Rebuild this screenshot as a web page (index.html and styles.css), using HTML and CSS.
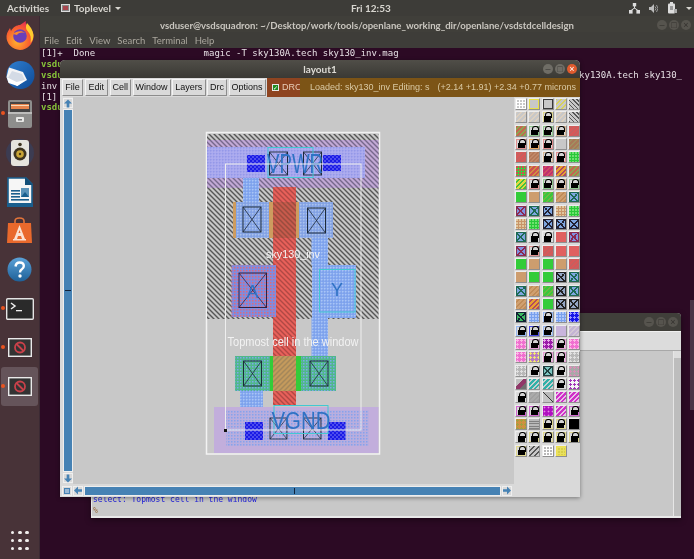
FILE: index.html
```html
<!DOCTYPE html>
<html lang="en">
<head>
<meta charset="utf-8">
<title>layout1</title>
<link rel="stylesheet" href="styles.css">
</head>
<body>
<div class="desktop">

  <header class="topbar">
    <span class="tb-activities">Activities</span>
    <span class="tb-app">
      <svg class="tb-appicon" width="9" height="8" viewBox="0 0 9 8"><rect x=".5" y=".5" width="8" height="7" fill="#888" stroke="#ddd"/><rect x="2" y="2" width="5" height="4" fill="#a8464e"/></svg>
      <span>Toplevel</span><i class="caret"></i>
    </span>
    <span class="tb-clock">Fri 12:53</span>
    <span class="tb-tray">
      <svg width="11" height="11" viewBox="0 0 11 11" fill="#ddd"><rect x="3.8" y="0" width="3.4" height="3.4"/><rect x="0" y="7" width="3.6" height="3.6"/><rect x="7.4" y="7" width="3.6" height="3.6"/><path d="M5.5 3v2.5M2 7.5 5.5 5 9 7.5" stroke="#ddd" fill="none"/></svg>
      <svg width="9" height="9" viewBox="0 0 9 9" fill="#bbb"><path d="M0 3h2l3-3v9L2 6H0z"/><path d="M6 2.500q2 2 0 4M7.500 1q3 3.500 0 7" stroke="#999" fill="none"/></svg>
      <svg width="10" height="12" viewBox="0 0 10 12" fill="#ddd"><rect x="1" y="1.500" width="7" height="10" rx="1"/><rect x="3" y="0" width="3" height="2"/><path d="M3 5h3M3 7h3" stroke="#555"/><path d="M7 7h3v4H7z" fill="#aaa"/></svg>
      <i class="caret"></i>
    </span>
  </header>

  <nav class="dock">
    <div class="dock-item">
      <svg width="30" height="30" viewBox="0 0 30 30"><defs><radialGradient id="ffx" cx=".4" cy=".7" r=".8"><stop offset="0" stop-color="#ffb52e"/><stop offset=".55" stop-color="#f9602f"/><stop offset="1" stop-color="#e0225c"/></radialGradient></defs><path d="M15 29A13.500 13.500 0 0 1 1.500 15C2 11 4 9 5 7l1 3c2-4 6-6 9-6 3-2 4-3 6-4-1 3 1 4 3 6 3 3 4.500 6 4.500 9A14 14 0 0 1 15 29z" fill="url(#ffx)"/><path d="M22 2c3 3 6 7 6.500 12 0 3-1 6-3 8 1-5 0-9-3-12-2-2-2-5-.5-8z" fill="#ffcb2e"/><circle cx="15" cy="15" r="6.800" fill="#6b3fb8"/><path d="M8 13c3-3 9-4 12-1-4-1-7 0-8 2z" fill="#ff8a2a"/></svg>
    </div>
    <div class="dock-item">
      <svg width="30" height="30" viewBox="0 0 30 30"><defs><linearGradient id="tb" x1="0" y1="0" x2="1" y2="1"><stop offset="0" stop-color="#2f7fd0"/><stop offset="1" stop-color="#0e4a96"/></linearGradient></defs><circle cx="15.500" cy="15" r="14" fill="url(#tb)"/><path d="M4 7.500 18 12 22 20 12 26 1.500 17z" fill="#f4f4f6"/><path d="M7 11l10 3 3 6-9 3-8-5z" fill="#d4dbe6"/><path d="M1.500 17l10 5 9-2-8 6-9-3z" fill="#fff"/></svg>
    </div>
    <div class="dock-item dock-running">
      <svg width="26" height="28" viewBox="0 0 26 28"><rect x="1" y="0" width="24" height="28" rx="2" fill="#8e8e8c"/><rect x="3" y="2" width="20" height="10" fill="#444"/><rect x="4" y="4" width="18" height="5" fill="#e4844c"/><rect x="4" y="5" width="18" height="1" fill="#f6d9b8"/><rect x="1" y="12" width="24" height="2" fill="#bdbdbb"/><rect x="9" y="17" width="8" height="5" rx="1" fill="#e8e8e6"/><rect x="11" y="19" width="4" height="1.500" fill="#777"/></svg>
    </div>
    <div class="dock-item">
      <svg width="30" height="28" viewBox="0 0 30 28"><circle cx="15" cy="14" r="14" fill="#3c3c52"/><rect x="6" y="1" width="18" height="26" rx="3" fill="#e6e4de"/><circle cx="15" cy="15" r="6.500" fill="#3d3320"/><circle cx="15" cy="15" r="3.800" fill="#c8a436"/><circle cx="15" cy="15" r="1.200" fill="#4a3a12"/><circle cx="15" cy="5.500" r="1.800" fill="#3d3320"/></svg>
    </div>
    <div class="dock-item">
      <svg width="26" height="30" viewBox="0 0 26 30"><path d="M1 1h18l6 6v22H1z" fill="#f6f6f6" stroke="#1a5f8e" stroke-width="1.600"/><path d="M18 0l8 8h-8z" fill="#134f78"/><rect x="0" y="26" width="26" height="4" fill="#1a5f8e"/><rect x="4" y="13" width="9" height="1.600" fill="#1a5f8e"/><rect x="4" y="16" width="9" height="1.600" fill="#1a5f8e"/><rect x="4" y="19" width="9" height="1.600" fill="#1a5f8e"/><rect x="4" y="22" width="18" height="1.600" fill="#1a5f8e"/><rect x="14" y="11" width="8" height="9" fill="#5b93b8"/><path d="M14 20l4-5 4 5z" fill="#1a5f8e"/></svg>
    </div>
    <div class="dock-item">
      <svg width="27" height="27" viewBox="0 0 27 27"><path d="M9 7V4q0-3 4.500-3T18 4v3" fill="none" stroke="#e2743a" stroke-width="1.600"/><path d="M2 6h23l1 20H1z" fill="#e9692c"/><path d="M13.500 8 8 22h3l1-3h3l1 3h3zM13.500 13l1 3h-2z" fill="#fbe3d4" fill-rule="evenodd"/><rect x="7" y="22" width="13" height="1.500" fill="#fbe3d4"/></svg>
    </div>
    <div class="dock-item">
      <svg width="25" height="25" viewBox="0 0 25 25"><defs><linearGradient id="hp" x1="0" y1="0" x2="0" y2="1"><stop offset="0" stop-color="#5ba2d8"/><stop offset="1" stop-color="#1e6098"/></linearGradient></defs><circle cx="12.500" cy="12.500" r="12" fill="url(#hp)"/><path d="M8.500 9.500Q9 5.500 12.700 5.500 16.800 5.500 16.800 9 16.800 11 14.800 12.300 13 13.400 13 15.500" fill="none" stroke="#fff" stroke-width="2.400"/><circle cx="13" cy="19" r="1.700" fill="#fff"/></svg>
    </div>
    <div class="dock-item dock-running">
      <svg width="28" height="22" viewBox="0 0 28 22"><rect x=".7" y=".7" width="26.600" height="20.600" rx="1" fill="#2a2a2a" stroke="#e4e4e4" stroke-width="1.400"/><path d="M5 5l4 3-4 3" fill="none" stroke="#eee" stroke-width="1.500"/><rect x="10" y="12" width="6" height="1.300" fill="#eee"/></svg>
    </div>
    <div class="dock-item dock-running">
      <svg width="24" height="19" viewBox="0 0 24 19"><rect x=".7" y=".7" width="22.600" height="17.600" fill="#333" stroke="#eaeaea" stroke-width="1.400"/><circle cx="12" cy="9.500" r="5" fill="none" stroke="#c9414a" stroke-width="1.800"/><path d="M8.500 6l7 7" stroke="#c9414a" stroke-width="1.800"/></svg>
    </div>
    <div class="dock-item dock-running dock-active">
      <svg width="24" height="19" viewBox="0 0 24 19"><rect x=".7" y=".7" width="22.600" height="17.600" fill="#333" stroke="#eaeaea" stroke-width="1.400"/><circle cx="12" cy="9.500" r="5" fill="none" stroke="#c9414a" stroke-width="1.800"/><path d="M8.500 6l7 7" stroke="#c9414a" stroke-width="1.800"/></svg>
    </div>
    <div class="dock-apps"><i></i><i></i><i></i><i></i><i></i><i></i><i></i><i></i><i></i></div>
  </nav>

  <section class="terminal">
    <div class="term-title">
      <span class="term-title-text">vsduser@vsdsquadron: ~/Desktop/work/tools/openlane_working_dir/openlane/vsdstdcelldesign</span>
      <span class="winbtns winbtns-term"><i>&#8211;</i><i>&#9633;</i><i>&#215;</i></span>
    </div>
    <div class="term-menu"><span>File</span><span>Edit</span><span>View</span><span>Search</span><span>Terminal</span><span>Help</span></div>
    <div class="term-body">
      <div class="term-line">[1]+  Done                    magic -T sky130A.tech sky130_inv.mag</div>
      <div class="term-line"><b>vsdu</b></div>
      <div class="term-line term-split"><b>vsdu</b><span>ky130A.tech sky130_</span></div>
      <div class="term-line">inv</div>
      <div class="term-line">[1]</div>
      <div class="term-line"><b>vsdu</b></div>
    </div>
    <i class="term-thumb"></i>
  </section>

  <section class="tkcon">
    <div class="tk-title"><span class="winbtns winbtns-tk"><i>&#8211;</i><i>&#9633;</i><i>&#215;</i></span></div>
    <div class="tk-menu"></div>
    <div class="tk-body">
      <div class="tk-text">
        <div class="tk-output">select: Topmost cell in the window</div>
        <div class="tk-prompt">%</div>
      </div>
      <div class="tk-scroll"><i></i></div>
    </div>
  </section>

  <section class="layout-win">
    <div class="lw-title">
      <span class="lw-name">layout1</span>
      <span class="winbtns winbtns-lw"><i>&#8211;</i><i>&#9633;</i><i class="close">&#215;</i></span>
    </div>
    <div class="lw-toolbar">
      <button class="mb mb-file">File</button>
      <button class="mb mb-edit">Edit</button>
      <button class="mb mb-cell">Cell</button>
      <button class="mb mb-window">Window</button>
      <button class="mb mb-layers">Layers</button>
      <button class="mb mb-drc">Drc</button>
      <button class="mb mb-options">Options</button>
      <span class="drc-check"><i class="tick">&#10003;</i>DRC</span>
      <span class="status"><span class="status-load">Loaded: sky130_inv Editing: s</span><span class="status-coord">(+2.14 +1.91) +2.34 +0.77 microns</span></span>
    </div>
    <div class="lw-main">
      <div class="vscroll">
        <span class="sbtn"><svg width="9" height="9" viewBox="0 0 9 9"><path d="M4.500 0 9 4.500H6V9H3V4.500H0z" fill="#4682b4"/></svg></span>
        <div class="vtrough"><i></i></div>
        <span class="sbtn"><svg width="9" height="9" viewBox="0 0 9 9"><path d="M4.500 9 9 4.500H6V0H3V4.500H0z" fill="#4682b4"/></svg></span>
      </div>
      <div class="canvas">
        <svg class="layout-svg" width="441" height="387" viewBox="73 97 441 387">
          <defs>
            <pattern id="nwell" width="5" height="5" patternUnits="userSpaceOnUse"><rect width="5" height="5" fill="#c8c8c8"/><path d="M0 0 5 5M-1 4 1 6M4-1 6 1" stroke="#565656" stroke-width="1.400"/></pattern>
            <pattern id="nwellpurple" width="5" height="5" patternUnits="userSpaceOnUse"><rect width="5" height="5" fill="#c2a9d6"/><path d="M0 0 5 5M-1 4 1 6M4-1 6 1" stroke="#76688c" stroke-width="1.400"/></pattern>
            <pattern id="metal" width="3" height="3" patternUnits="userSpaceOnUse"><rect width="3" height="3" fill="#84a8f0"/><rect x="0" y="0" width="1.500" height="1.500" fill="#a9c4f5"/><rect x="1.500" y="1.500" width="1" height="1" fill="#6b8fe0"/></pattern>
            <pattern id="metalvio" width="3" height="3" patternUnits="userSpaceOnUse"><rect width="3" height="3" fill="#a8a8ee"/><rect x="0" y="0" width="1.500" height="1.500" fill="#9498e8"/><rect x="1.500" y="1.500" width="1" height="1" fill="#bcb8f2"/></pattern>
            <pattern id="metalred" width="3" height="3" patternUnits="userSpaceOnUse"><rect width="3" height="3" fill="#7e8ce0"/><rect x="0" y="0" width="1.500" height="1.500" fill="#dc6a7c"/></pattern>
            <pattern id="metalgreen" width="3" height="3" patternUnits="userSpaceOnUse"><rect width="3" height="3" fill="#50b88a"/><rect x="0" y="0" width="1.500" height="1.500" fill="#7ca8ec"/></pattern>
            <pattern id="metallil" width="3" height="3" patternUnits="userSpaceOnUse"><rect width="3" height="3" fill="#b9aede"/><rect x="0" y="0" width="1.500" height="1.500" fill="#86a2ec"/></pattern>
            <pattern id="m2" width="4" height="4" patternUnits="userSpaceOnUse"><rect width="4" height="4" fill="#1a1ae6"/><circle cx="1" cy="1" r=".8" fill="#8c8cf8"/><circle cx="3" cy="3" r=".8" fill="#8c8cf8"/></pattern>
            <pattern id="polyhatch" width="5" height="5" patternUnits="userSpaceOnUse"><rect width="5" height="5" fill="#e8605a"/><path d="M0 0 5 5M-1 4 1 6M4-1 6 1" stroke="#b04844" stroke-width="1.400"/></pattern>
            <pattern id="polytan" width="5" height="5" patternUnits="userSpaceOnUse"><rect width="5" height="5" fill="#c85a4c"/><path d="M0 0 5 5M-1 4 1 6M4-1 6 1" stroke="#9a4c3e" stroke-width="1.500"/></pattern>
            <pattern id="polygreen" width="5" height="5" patternUnits="userSpaceOnUse"><rect width="5" height="5" fill="#c49a5c"/><path d="M0 5 5 0M-1 1 1-1M4 6 6 4" stroke="#a4875a" stroke-width="1.500"/></pattern>
            <g id="cx"><rect width="18" height="25" fill="none" stroke="#1d2a3a" stroke-width="1"/><path d="M0 0 18 25M18 0 0 25" stroke="#1d2a3a" stroke-width=".8"/></g>
          </defs>

          <rect class="l-frame" x="206.500" y="132.500" width="173" height="321.500"/>
          <rect x="207" y="134" width="171.500" height="185" fill="url(#nwell)"/>
          <rect x="207" y="140" width="171.500" height="48" fill="url(#nwellpurple)"/>
          <rect x="207" y="147" width="158" height="31" fill="url(#metalvio)"/>
          <rect x="247" y="155" width="18" height="17" fill="url(#m2)"/>
          <rect x="323" y="155" width="18" height="16" fill="url(#m2)"/>
          <use href="#cx" transform="translate(269.500 152) scale(1 .92)"/>
          <use href="#cx" transform="translate(303.500 152) scale(1 .92)"/>
          <rect x="268" y="147.500" width="45" height="30" class="l-label"/>
          <text class="t-pin" x="267" y="173" font-size="27" textLength="56" lengthAdjust="spacingAndGlyphs">VPWR</text>

          <rect x="243" y="178" width="16" height="24" fill="url(#metal)"/>
          <rect x="233" y="202" width="100" height="36" fill="#cd9c5f"/>
          <rect x="273" y="187" width="23" height="218" fill="url(#polyhatch)"/>
          <rect x="273" y="202" width="23" height="36" fill="url(#polytan)"/>
          <rect x="236" y="202" width="33" height="36" fill="url(#metal)" opacity=".94"/>
          <rect x="299" y="202" width="34" height="36" fill="url(#metal)" opacity=".94"/>
          <use href="#cx" transform="translate(243 207)"/>
          <use href="#cx" transform="translate(307.500 208)"/>
          <rect x="311.500" y="238" width="16.500" height="27" fill="url(#metal)"/>

          <rect x="231.500" y="265" width="44.500" height="52" fill="url(#metalred)"/>
          <rect x="239" y="273" width="27.500" height="34.500" fill="none" stroke="#2a2244" stroke-width="1"/>
          <path d="M239 273 266.500 307.500M266.500 273 239 307.500" stroke="#2a2244" stroke-width=".8"/>
          <text class="t-pin" x="252.500" y="298" font-size="18" text-anchor="middle">A</text>
          <rect x="312" y="265" width="44" height="53" fill="url(#metal)"/>
          <rect x="319.500" y="269.500" width="35.500" height="42.500" class="l-label"/>
          <text class="t-pin" x="337" y="296" font-size="18" text-anchor="middle">Y</text>
          <rect x="311.500" y="318" width="16.500" height="39" fill="url(#metal)"/>

          <rect x="235" y="356" width="101" height="35" fill="#33cc39"/>
          <rect x="235" y="356" width="35" height="35" fill="url(#metalgreen)"/>
          <rect x="301" y="356" width="35" height="35" fill="url(#metalgreen)"/>
          <rect x="273" y="356" width="23" height="35" fill="url(#polygreen)"/>
          <use href="#cx" transform="translate(243.500 361)"/>
          <use href="#cx" transform="translate(310 361)"/>
          <rect x="240" y="391" width="23" height="16" fill="url(#metal)"/>

          <rect x="214" y="407" width="164.500" height="46" fill="#c2aedc"/>
          <rect x="226" y="410" width="143" height="36" fill="url(#metallil)"/>
          <rect x="245" y="422" width="18" height="18" fill="url(#m2)"/>
          <rect x="328" y="422" width="17.500" height="18" fill="url(#m2)"/>
          <use href="#cx" transform="translate(270 418) scale(.94 .84)"/>
          <use href="#cx" transform="translate(303.500 418) scale(.97 .84)"/>
          <rect x="274" y="405.500" width="54" height="28" class="l-label"/>
          <text class="t-pin" x="301" y="429" font-size="23" text-anchor="middle" textLength="59" lengthAdjust="spacingAndGlyphs">VGND</text>

          <rect class="l-bbox" x="225.500" y="164" width="135.500" height="266"/>
          <rect x="224" y="429" width="3" height="3" fill="#111"/>
          <text class="t-white" x="293" y="258" text-anchor="middle" font-size="11.500" textLength="54" lengthAdjust="spacingAndGlyphs">sky130_inv</text>
          <text class="t-white" x="293" y="346" text-anchor="middle" font-size="12" textLength="131" lengthAdjust="spacingAndGlyphs">Topmost cell in the window</text>
        </svg>
      </div>
      <div class="palette">
        <i class="sw p-grid"></i><i class="sw p-yo"></i><i class="sw p-go"></i><i class="sw p-yh"></i><i class="sw p-dh"></i>
        <i class="sw p-lh"></i><i class="sw p-lh"></i><i class="sw lk lk-y"></i><i class="sw p-lh"></i><i class="sw p-dh"></i>
        <i class="sw p-olive"></i><i class="sw lk lk-g"></i><i class="sw lk lk-g"></i><i class="sw lk lk-t"></i><i class="sw p-redh"></i>
        <i class="sw lk lk-r"></i><i class="sw lk lk-o"></i><i class="sw lk lk-r"></i><i class="sw p-plain"></i><i class="sw p-brown"></i>
        <i class="sw p-redh"></i><i class="sw p-tandk"></i><i class="sw lk lk-t"></i><i class="sw lk lk-r"></i><i class="sw p-gdots"></i>
        <i class="sw p-grdots"></i><i class="sw p-orh"></i><i class="sw p-magh"></i><i class="sw p-oyh"></i><i class="sw p-olive"></i>
        <i class="sw p-ygh"></i><i class="sw lk lk-r"></i><i class="sw lk lk-g"></i><i class="sw lk lk-t"></i><i class="sw lk lk-g"></i>
        <i class="sw p-green"></i><i class="sw p-tan"></i><i class="sw p-gh"></i><i class="sw p-th"></i><i class="sw xx xx-g"></i>
        <i class="sw xx xx-r"></i><i class="sw xx xx-g"></i><i class="sw xx xx-b"></i><i class="sw p-tdots"></i><i class="sw p-gdots"></i>
        <i class="sw p-tdots"></i><i class="sw p-gdots"></i><i class="sw xx xx-b"></i><i class="sw xx xx-b"></i><i class="sw xx xx-b"></i>
        <i class="sw xx xx-g"></i><i class="sw lk"></i><i class="sw lk"></i><i class="sw p-red"></i><i class="sw xx xx-r"></i>
        <i class="sw xx xx-r"></i><i class="sw lk lk-r"></i><i class="sw p-redh"></i><i class="sw p-red"></i><i class="sw p-red"></i>
        <i class="sw p-green"></i><i class="sw p-tan"></i><i class="sw p-green"></i><i class="sw p-tan"></i><i class="sw p-redh"></i>
        <i class="sw p-tan"></i><i class="sw p-green"></i><i class="sw p-green"></i><i class="sw xx xx-t"></i><i class="sw xx xx-g"></i>
        <i class="sw xx xx-g"></i><i class="sw p-th"></i><i class="sw p-gh"></i><i class="sw xx xx-t"></i><i class="sw xx xx-g"></i>
        <i class="sw p-th"></i><i class="sw p-oyh"></i><i class="sw p-green"></i><i class="sw xx xx-t"></i><i class="sw xx xx-t"></i>
        <i class="sw xx xx-gg"></i><i class="sw p-bdots"></i><i class="sw lk lk-b"></i><i class="sw p-bdots"></i><i class="sw p-bdense"></i>
        <i class="sw lk lk-b"></i><i class="sw lk lk-db"></i><i class="sw lk lk-b"></i><i class="sw p-lil"></i><i class="sw p-lilh"></i>
        <i class="sw p-pink"></i><i class="sw lk lk-p"></i><i class="sw p-purp"></i><i class="sw lk lk-p"></i><i class="sw p-pink"></i>
        <i class="sw p-pink"></i><i class="sw p-yellow"></i><i class="sw lk lk-p"></i><i class="sw lk lk-p"></i><i class="sw p-gray"></i>
        <i class="sw p-gray"></i><i class="sw lk"></i><i class="sw xx xx-teal"></i><i class="sw lk"></i><i class="sw p-pg"></i>
        <i class="sw p-dph"></i><i class="sw p-teal"></i><i class="sw p-teal"></i><i class="sw lk"></i><i class="sw p-pw"></i>
        <i class="sw lk"></i><i class="sw p-gh2"></i><i class="sw p-dh2"></i><i class="sw p-mh"></i><i class="sw p-mh"></i>
        <i class="sw lk lk-m"></i><i class="sw lk lk-m"></i><i class="sw p-md"></i><i class="sw p-mh"></i><i class="sw lk lk-m"></i>
        <i class="sw p-odots"></i><i class="sw p-stripes"></i><i class="sw lk lk-y"></i><i class="sw lk lk-y"></i><i class="sw p-black"></i>
        <i class="sw lk"></i><i class="sw lk lk-y"></i><i class="sw lk lk-y"></i><i class="sw lk lk-y"></i><i class="sw lk lk-y"></i>
        <i class="sw lk lk-y"></i><i class="sw p-dh3"></i><i class="sw p-wgrid"></i><i class="sw p-ydots"></i>
      </div>
      <div class="hscroll">
        <span class="sbtn sbtn-corner"><i></i></span>
        <span class="sbtn"><svg width="9" height="9" viewBox="0 0 9 9"><path d="M0 4.500 4.500 0V3H9V6H4.500V9z" fill="#4682b4"/></svg></span>
        <div class="htrough"><i></i></div>
        <span class="sbtn"><svg width="9" height="9" viewBox="0 0 9 9"><path d="M9 4.500 4.500 0V3H0V6H4.500V9z" fill="#4682b4"/></svg></span>
      </div>
    </div>
  </section>

</div>
</body>
</html>
```
FILE: styles.css
```css
* { box-sizing: border-box; }
html, body { margin: 0; padding: 0; }
body { width: 694px; height: 559px; overflow: hidden; background: #2c0a24; font-family: "Liberation Sans", Arial, sans-serif; }

.desktop { position: relative; width: 694px; height: 559px; overflow: hidden; background: #2c0a24; filter: blur(.35px); }

/* top bar */
.topbar { position: absolute; left: 0; top: 0; width: 694px; height: 16px; background: #3d3c38; color: #d8d6d0; font: bold 10px/16px Lato, sans-serif; display: flex; align-items: center; padding-left: 7px; z-index: 5; }
.tb-activities { width: 54px; }
.tb-app { display: flex; align-items: center; gap: 4px; width: 290px; }
.tb-clock { width: 278px; }
.tb-tray { display: flex; align-items: center; gap: 9px; }
.caret { display: inline-block; width: 0; height: 0; border: 3px solid transparent; border-top: 3px solid #d8d6d0; border-bottom: 0; }

/* dock */
.dock { position: absolute; left: 0; top: 16px; bottom: 0; width: 40px; background: #483338; border-right: 1px solid #3b2a33; display: flex; flex-direction: column; align-items: center; z-index: 4; }
.dock-item { position: relative; width: 37px; height: 39px; flex: none; display: flex; align-items: center; justify-content: center; border-radius: 3px; }
.dock-running::before { content: ""; position: absolute; left: 0; top: 17px; width: 4px; height: 4px; border-radius: 50%; background: #e95420; }
.dock-active { background: #65545a; }
.dock-apps { margin-top: auto; margin-bottom: 9px; display: grid; grid-template-columns: repeat(3, 3px); gap: 4.300px; }
.dock-apps i { width: 3.500px; height: 3.500px; border-radius: 50%; background: #f2f0ee; }

/* terminal */
.terminal { position: absolute; left: 40px; top: 16px; width: 654px; bottom: 0; }
.term-title { height: 16px; background: #403f3a; display: flex; justify-content: center; color: #c9c6bf; font: bold 9.600px/18px Lato, sans-serif; position: relative; }
.term-title-text { padding-top: 1px; }
.term-menu { height: 16px; background: #3e3d39; display: flex; color: #aaa69d; font: 9.500px/17px Lato, sans-serif; padding-left: 4px; gap: 7px; }
.term-body { padding-left: 1px; font: 9px/10.900px "DejaVu Sans Mono", monospace; color: #e6e0e4; }
.term-line { width: fit-content; height: 10.900px; white-space: pre; }
.term-line b { color: #87c33a; font-weight: bold; }
.term-split { width: 641px; display: flex; justify-content: space-between; }
.term-thumb { position: absolute; right: 0; top: 284px; width: 4px; height: 110px; background: #4a3446; }

/* window controls */
.winbtns { position: absolute; display: flex; gap: 2px; }
.winbtns i { width: 10px; height: 10px; border-radius: 50%; background: #56544e; color: #34322e; font: normal 9px/10px "Liberation Sans", sans-serif; text-align: center; }
.winbtns-term { right: 3px; top: 4px; }
.winbtns-lw { right: 3px; top: 4px; }
.winbtns-lw i { background: #6f6d66; color: #3e3c38; }
.winbtns-lw .close { background: #e15b2e; color: #fff; }
.winbtns-tk { right: 3px; top: 4px; }

/* tkcon window */
.tkcon { position: absolute; left: 91px; top: 313px; width: 590px; height: 205px; background: #c8c8c8; display: flex; flex-direction: column; border-radius: 4px 4px 0 0; box-shadow: 0 2px 6px rgba(0,0,0,.4); z-index: 1; }
.tk-title { height: 18px; background: #403f3a; position: relative; border-radius: 4px 4px 0 0; flex: none; }
.tk-menu { height: 20px; background: #dcdcdc; border-top: 1px solid #f0f0f0; border-bottom: 1px solid #a8a8a8; flex: none; }
.tk-body { flex: 1; display: flex; border-bottom: 2px solid #e8e8e8; border-left: 1px solid #e8e8e8; }
.tk-text { flex: 1; display: flex; flex-direction: column; justify-content: flex-end; padding: 0 0 0 1px; font: 8px/10.500px "DejaVu Sans Mono", monospace; }
.tk-output { color: #2222dc; }
.tk-prompt { color: #a07c58; font-weight: bold; }
.tk-scroll { width: 8px; background: #bdbdbd; border-left: 1px solid #e6e6e6; }
.tk-scroll i { display: block; height: 7px; background: #ddd; }

/* layout window */
.layout-win { position: absolute; left: 60px; top: 60px; width: 520px; height: 437px; background: #d9d9d9; border-radius: 5px 5px 0 0; box-shadow: 0 1px 4px rgba(0,0,0,.4); display: flex; flex-direction: column; z-index: 3; }
.lw-title { height: 18px; flex: none; background: linear-gradient(#504e48, #3a3934); border-radius: 5px 5px 0 0; position: relative; text-align: center; color: #dedcd6; font: bold 10px/18px Lato, sans-serif; }
.lw-toolbar { height: 19px; flex: none; display: flex; align-items: stretch; padding: 1px 0 1px 2px; background: #d9d9d9; font: 9px/15px "Liberation Sans", sans-serif; color: #111; white-space: nowrap; }
.mb { margin: 0 1.500px 0 0; padding: 0; background: #d9d9d9; border: 1px solid; border-color: #f4f4f4 #8c8c8c #8c8c8c #f4f4f4; font: inherit; color: inherit; text-align: center; }
.mb-file { width: 21px; }
.mb-edit { width: 23.500px; }
.mb-cell { width: 21.500px; }
.mb-window { width: 38px; }
.mb-layers { width: 33.500px; }
.mb-drc { width: 20px; }
.mb-options { width: 37px; }
.drc-check { margin: -1px 0 -1px 0; width: 33px; flex: none; background: #8e4420; color: #e8cdb8; display: flex; align-items: center; padding-left: 5px; gap: 3px; }
.tick { width: 7px; height: 7px; flex: none; background: #1e8a1e; color: #fff; border: 1px solid #e8e8e8; font: bold 6px/6px "DejaVu Sans", sans-serif; text-align: center; }
.status { margin: -1px 0; flex: 1; background: #7c5416; color: #d9c9a4; display: flex; justify-content: space-between; padding: 0 4px 0 10px; align-items: center; }

.lw-main { flex: 1; display: grid; grid-template-columns: 13px 441px 66px; grid-template-rows: 387px 13px; min-height: 0; }
.vscroll { display: flex; flex-direction: column; align-items: center; padding: 1px 0 1px 2px; gap: 1px; }
.sbtn { width: 10px; height: 10px; flex: none; background: #d9d9d9; border: 1px solid #efefef; display: flex; align-items: center; justify-content: center; }
.vtrough { flex: 1; width: 10px; background: #4682b4; border: 1px solid #eeeeee; position: relative; }
.vtrough i { position: absolute; left: 1px; top: 180px; width: 6px; height: 1px; background: #10223a; }
.canvas { background: #c8c8c8; overflow: hidden; }
.layout-svg { display: block; }
.palette { grid-row: 1 / 3; grid-column: 3; display: grid; grid-template-columns: repeat(5, 13.250px); grid-auto-rows: 13.340px; padding: 1px 0 0 1px; align-content: start; background: #d9d9d9; }
.hscroll { grid-column: 1 / 3; display: flex; align-items: center; gap: 1px; padding-left: 2px; }
.sbtn-corner i { width: 6px; height: 6px; border: 1px solid #4682b4; background: #9ab8d4; }
.htrough { width: 417px; height: 10px; background: #4682b4; border: 1px solid #eee; position: relative; }
.htrough i { position: absolute; left: 209px; top: 1px; width: 1px; height: 6px; background: #10223a; }

/* SVG layers */
.l-frame { fill: none; stroke: #f2f2f2; stroke-width: 1.500; }
.l-bbox { fill: none; stroke: #eeeeee; stroke-width: 1; }
.l-label { fill: none; stroke: #42c8d2; stroke-width: 1; }
.t-pin { fill: #2f72c4; font-family: "Liberation Sans", sans-serif; }
.t-white { fill: #f2f2f2; font-family: "Liberation Sans", sans-serif; }

/* palette swatches */
.sw { display: block; width: 12px; height: 12px; background-color: #c8c8c8; border: 1px solid; border-color: #ededed #8f8f8f #8f8f8f #ededed; position: relative; }
.p-grid { background: repeating-linear-gradient(0deg, #fff 0 1px, transparent 1px 3px), repeating-linear-gradient(90deg, #fff 0 1px, transparent 1px 3px), #c8c8c8; }
.p-yo { box-shadow: inset 0 0 0 1px #e8e048; }
.p-go { box-shadow: inset 0 0 0 1px #3a3a3a; }
.p-yh { background: repeating-linear-gradient(135deg, #d8d25c 0 1px, #c8c8c8 1px 3.500px); }
.p-dh { background: repeating-linear-gradient(45deg, #555 0 1px, #c8c8c8 1px 3px); }
.p-dh2 { background: linear-gradient(45deg, #c4c4c4 46%, #333 46% 54%, #b8b8b8 54%); }
.p-dh3 { background: repeating-linear-gradient(135deg, #555 0 1px, #c8c8c8 1px 3.500px); }
.p-lh { background: repeating-linear-gradient(135deg, #ddd0c0 0 1px, #c8c8c8 1px 3.500px); }
.p-olive { background: repeating-linear-gradient(135deg, #c06a50 0 1.500px, #8aa850 1.500px 3.500px); }
.p-brown { background: repeating-linear-gradient(135deg, #a87858 0 1.500px, #a09060 1.500px 3.500px); }
.p-redh { background: repeating-linear-gradient(135deg, #d85858 0 1.500px, #c46060 1.500px 3.500px); }
.p-plain { background-color: #c8c8c8; }
.p-tandk { background: repeating-linear-gradient(135deg, #b47858 0 1.500px, #c08868 1.500px 3px); }
.p-gdots { background: radial-gradient(circle at 1px 1px, #70e070 1px, #28c838 1.200px) 0 0 / 3px 3px; }
.p-grdots { background: radial-gradient(circle at 1px 1px, #d84a50 1px, #3ccc40 1.200px) 0 0 / 3px 3px; }
.p-orh { background: repeating-linear-gradient(135deg, #cd5050 0 1.500px, #d09040 1.500px 3.500px); }
.p-magh { background: repeating-linear-gradient(135deg, #c03070 0 1.500px, #d05060 1.500px 3.500px); }
.p-oyh { background: repeating-linear-gradient(135deg, #e8a030 0 1.500px, #b04a60 1.500px 3.500px); }
.p-ygh { background: repeating-linear-gradient(135deg, #e0d840 0 1.500px, #40c040 1.500px 3.500px); }
.p-green { background-color: #33cc39; }
.p-tan { background-color: #cd9d6e; }
.p-red { background-color: #e06060; }
.p-gh { background: repeating-linear-gradient(135deg, #38c83e 0 1.500px, #70b840 1.500px 3.500px); }
.p-th { background: repeating-linear-gradient(135deg, #d0a070 0 1.500px, #c08c58 1.500px 3.500px); }
.p-tdots { background: radial-gradient(circle at 1px 1px, #e0c8a0 1px, #c89468 1.200px) 0 0 / 3px 3px; }
.p-bdots { background: radial-gradient(circle at 1px 1px, #b0c8f8 1px, #78a0ee 1.200px) 0 0 / 3px 3px; }
.p-bdense { background: radial-gradient(circle at 1.500px 1.500px, #9898ff 1px, #1616e8 1.200px) 0 0 / 4px 4px; }
.p-lil { background-color: #c8b4dc; }
.p-lilh { background: repeating-linear-gradient(135deg, #c4b4d4 0 1.500px, #d4c8d4 1.500px 3.500px); }
.p-pink { background: radial-gradient(circle at 1.500px 1.500px, #fbb8e4 1px, #f070d0 1.400px) 0 0 / 4px 4px; }
.p-purp { background: radial-gradient(circle at 1.500px 1.500px, #e8a8e8 1px, #9a1aa8 1.400px) 0 0 / 4px 4px; }
.p-yellow { background: radial-gradient(circle at 1.500px 1.500px, #f0e870 1px, #b87cc0 1.400px) 0 0 / 4px 4px; }
.p-gray { background: radial-gradient(circle at 1.500px 1.500px, #e0e0e0 1px, #b8b8b8 1.400px) 0 0 / 4px 4px; }
.p-pg { background: radial-gradient(circle at 1.500px 1.500px, #d890b8 1px, #a8a8a8 1.400px) 0 0 / 4px 4px; }
.p-dph { background: linear-gradient(135deg, #c0c0c0 35%, #903868 35% 65%, #707070 65%); }
.p-teal { background: repeating-linear-gradient(135deg, #30b0a8 0 1.500px, #c8d0d0 1.500px 3.500px); }
.p-pw { background: radial-gradient(circle at 1.500px 1.500px, #a030b8 1.200px, #f4f4f4 1.400px) 0 0 / 4px 4px; }
.p-gh2 { background: repeating-linear-gradient(135deg, #aaa 0 1.500px, #a0a0a0 1.500px 3.500px); }
.p-mh { background: repeating-linear-gradient(135deg, #d030c8 0 1.500px, #e8c0e8 1.500px 3.500px); }
.p-md { background: radial-gradient(circle at 1.500px 1.500px, #e888e8 .8px, #b010c0 1.100px) 0 0 / 4px 4px; }
.p-odots { background: radial-gradient(circle at 1.500px 1.500px, #a0a040 1px, #d09040 1.400px) 0 0 / 4px 4px; }
.p-stripes { background: repeating-linear-gradient(0deg, #808080 0 1px, #b8b8b8 1px 2.500px); }
.p-black { background-color: #000; }
.p-wgrid { background: repeating-linear-gradient(0deg, #fff 0 1px, transparent 1px 3px), repeating-linear-gradient(90deg, #fff 0 1px, transparent 1px 3px), #b8b8b8; }
.p-ydots { background: radial-gradient(circle at 1.500px 1.500px, #e8e060 1px, #d8d048 1.400px) 0 0 / 3px 3px; box-shadow: inset 0 0 0 1px #eee050; }

/* contact swatches */
.xx { --fill: #7ea6e0; --edge: #223; background:
    linear-gradient(45deg, transparent 45%, var(--edge) 45% 55%, transparent 55%),
    linear-gradient(-45deg, transparent 45%, var(--edge) 45% 55%, transparent 55%),
    var(--fill); box-shadow: inset 0 0 0 1px var(--edge); }
.xx-b { --fill: #7ea6e0; }
.xx-g { --fill: #7ea6e0; --edge: #1e6a54; }
.xx-gg { --fill: #3cb860; --edge: #123; }
.xx-r { --fill: #8090e0; --edge: #8a2a50; }
.xx-t { --fill: #94a6c4; --edge: #222; }
.xx-teal { --fill: #7cc4c0; --edge: #204040; }

/* lock swatches */
.lk { --halo: #ddd; background-color: #d6d6d6; box-shadow: inset 0 0 0 1px var(--halo); overflow: hidden; }
.lk::before { content: ""; position: absolute; left: 2.500px; top: 0; width: 5px; height: 5px; border: 1.500px solid #000; border-bottom: 0; border-radius: 3px 3px 0 0; }
.lk::after { content: ""; position: absolute; left: 1.500px; top: 4px; width: 7px; height: 5.500px; background: #000; }
.lk-y { --halo: #e0d890; }
.lk-g { --halo: #90c890; }
.lk-t { --halo: #d8b898; }
.lk-r { --halo: #e09090; }
.lk-o { --halo: #e8a860; }
.lk-b { --halo: #98b8f0; }
.lk-db { --halo: #4848e0; }
.lk-p { --halo: #e8a0d8; }
.lk-m { --halo: #d068d0; }
```
